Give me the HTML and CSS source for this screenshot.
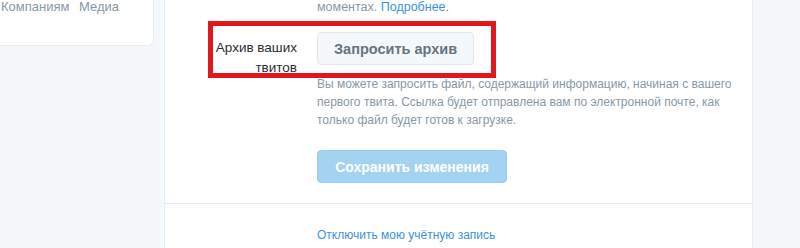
FILE: index.html
```html
<!DOCTYPE html>
<html lang="ru">
<head>
    <meta charset="UTF-8">
    <title>Настройки учётной записи</title>
    <link rel="stylesheet" href="styles.css">
</head>
<body>
    <div class="page">
        <div class="side">
            <div class="side-card">
                <span>Компаниям</span>
                <span>Медиа</span>
            </div>
        </div>

        <div class="settings">
            <p class="note first">моментах. <a href="#">Подробнее.</a></p>

            <div class="row">
                <div class="label">Архив ваших твитов</div>
                <div class="control">
                    <button class="btn">Запросить архив</button>
                    <p class="note">Вы можете запросить файл, содержащий информацию, начиная с вашего первого твита. Ссылка будет отправлена вам по электронной почте, как только файл будет готов к загрузке.</p>
                </div>
            </div>

            <div class="row">
                <div class="label"></div>
                <div class="control">
                    <button class="btn btn-primary" disabled>Сохранить изменения</button>
                </div>
            </div>

            <div class="footer">
                <a href="#">Отключить мою учётную запись</a>
            </div>

            <!-- annotation frame around the archive row -->
            <div class="highlight"></div>
        </div>
    </div>
</body>
</html>
```

FILE: styles.css
```css
/* General Styles */
body {
    margin: 0;
    padding: 0;
    font-family: "Liberation Sans", Arial, sans-serif;
    font-size: 12px;
    background: #f5f8fa;
    color: #292f33;
    height: 248px;
    overflow: hidden;
}

a {
    color: #3b94d9;
    text-decoration: none;
}

.page {
    display: flex;
    align-items: flex-start;
}

/* Left column */
.side {
    width: 164px;
    flex-shrink: 0;
}

.side-card {
    margin-left: -10px;
    margin-top: -1px;
    width: 152px;
    height: 36px;
    padding: 0 0 10px 10px;
    background: #fff;
    border: 1px solid #e6ecf0;
    border-top: none;
    border-radius: 0 0 6px 6px;
    color: #8899a6;
    font-size: 13px;
    line-height: 16px;
}

.side-card span {
    margin-right: 6px;
}

/* Main panel */
.settings {
    position: relative;
    width: 587px;
    min-height: 260px;
    background: #fff;
    border-left: 1px solid #e6ecf0;
    border-right: 1px solid #e6ecf0;
}

.note {
    margin: 0;
    color: #8899a6;
    line-height: 18px;
}

.note.first {
    margin: -2px 0 0 152px;
    font-size: 12.5px;
}

.row {
    display: flex;
    gap: 20px;
}

.row:first-of-type {
    margin-top: 16px;
}

.label {
    width: 86px;
    padding-left: 46px;
    text-align: right;
    font-size: 13.5px;
    line-height: 20px;
    padding-top: 6px;
}

.control {
    width: 432px;
}

.btn {
    display: block;
    height: 33px;
    padding: 0 16px;
    font-family: inherit;
    font-size: 14.5px;
    font-weight: bold;
    color: #66757f;
    background: #f5f8fa;
    border: 1px solid #e1e8ed;
    border-radius: 4px;
    margin-bottom: 10px;
}

.btn-primary {
    width: 190px;
    margin: 21px 0 0;
    font-size: 14px;
    color: #fff;
    background: #a4d3f2;
    border-color: #9ccdee;
}

.footer {
    margin-top: 20px;
    border-top: 1px solid #e6ecf0;
    padding: 22px 0 0 152px;
    line-height: 18px;
}

.highlight {
    position: absolute;
    left: 43px;
    top: 21px;
    width: 278px;
    height: 47px;
    border: 5px solid #e3151d;
}
```
